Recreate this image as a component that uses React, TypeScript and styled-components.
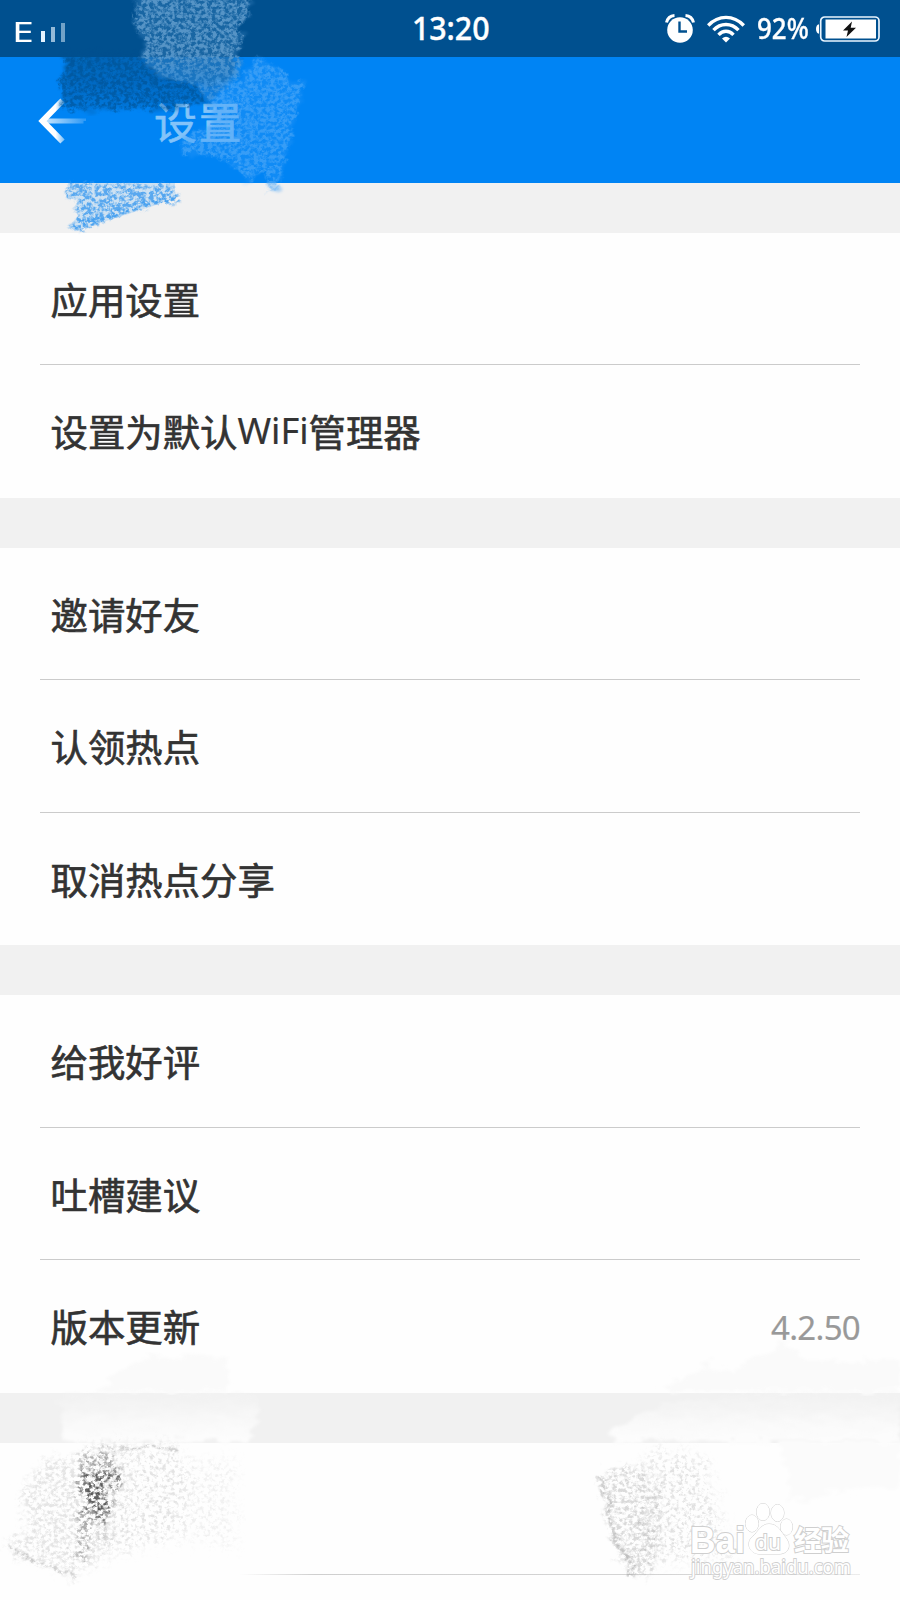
import React from "react";
import styled, { createGlobalStyle } from "styled-components";

const GlobalStyle = createGlobalStyle`
  *, *::before, *::after { box-sizing: border-box; }
  body { margin: 0; background: #fefefe; }
`;

const sans = `"Noto Sans", "Noto Sans CJK SC", sans-serif`;

const Screen = styled.div`
  position: relative;
  width: 900px;
  height: 1600px;
  overflow: hidden;
  display: flex;
  flex-direction: column;
  background: #fefefe;
  font-family: ${sans};
`;

const StatusBar = styled.header`
  flex: none;
  height: 57px;
  display: grid;
  grid-template-columns: 1fr auto 1fr;
  align-items: center;
  padding: 0 20px 0 12px;
  background: #00508f;
  color: #fff;
`;

const Carrier = styled.div`
  display: flex;
  align-items: flex-end;
  gap: 9px;
  height: 20px;
  margin-top: 6px;
`;

const Network = styled.span`
  width: 20px;
  font-size: 28px;
  line-height: 22px;
  font-weight: 400;
  transform: scaleX(1.4);
  transform-origin: left bottom;
`;

const SignalBars = styled.div`
  display: flex;
  align-items: flex-end;
  gap: 6px;
`;

const Bar = styled.i<{ $h: number; $o: number }>`
  width: 4px;
  height: ${(p) => p.$h}px;
  background: #e4f3ff;
  opacity: ${(p) => p.$o};
`;

const Clock = styled.time`
  display: block;
  font-size: 33px;
  line-height: 55px;
  padding-bottom: 2px;
  font-weight: 500;
  transform: translateX(4.5px) scaleX(0.92);
  -webkit-text-stroke: 0.4px #fff;
`;

const StatusIcons = styled.div`
  display: flex;
  justify-content: flex-end;
  align-items: center;
`;

const Percent = styled.span`
  width: 53px;
  margin: 0 5px 0 12px;
  font-size: 28.5px;
  line-height: 57px;
  font-weight: 500;
  transform: scaleX(0.91);
  transform-origin: left;
  -webkit-text-stroke: 0.3px #fff;
`;

const TitleBar = styled.div`
  flex: none;
  height: 125.5px;
  display: flex;
  align-items: center;
  padding-left: 38px;
  background: #0084f4;
`;

const Title = styled.h1`
  margin: 7px 0 0 68px;
  font: 400 43px/60px ${sans};
  color: #83c3f9;
  letter-spacing: 1.6px;
  -webkit-text-stroke: 0.6px #83c3f9;
`;

const Spacer = styled.div`
  flex: none;
  height: 50px;
  background: #f1f1f1;
`;

const Group = styled.section`
  flex: none;
  background: #fefefe;
  padding: 0 40px;
`;

const Row = styled.div`
  height: 132.5px;
  display: flex;
  align-items: center;
  justify-content: space-between;
  padding: 5px 0 0 10.5px;
  font-size: 37.4px;
  line-height: 54px;
  color: #333;

  &:not(:last-child) {
    border-bottom: 1px solid #cbcbcb;
  }

  &:last-child {
    padding-top: 4px;
  }
`;

const Label = styled.span`
  -webkit-text-stroke: 0.65px #333;
`;

const Latin = styled.span`
  font-size: 36.2px;
  line-height: 1;
  vertical-align: 3px;
  -webkit-text-stroke-width: 0.2px;
`;

const Version = styled.span`
  font-size: 33px;
  color: #999;
  letter-spacing: -0.7px;
  -webkit-text-stroke: 0.2px #999;
`;

const FooterLine = styled.div`
  flex: none;
  width: 620px;
  height: 1px;
  margin: 131.5px 0 0 240px;
  background: linear-gradient(90deg, transparent, #cfcfcf 12%, #d5d5d5 70%, #ececec);
`;

const Overlay = styled.svg`
  position: absolute;
  left: 0;
  top: 0;
  pointer-events: none;
`;

const groups: { label: React.ReactNode; value?: string }[][] = [
  [{ label: "应用设置" }, { label: <>设置为默认<Latin>WiFi</Latin>管理器</> }],
  [{ label: "邀请好友" }, { label: "认领热点" }, { label: "取消热点分享" }],
  [{ label: "给我好评" }, { label: "吐槽建议" }, { label: "版本更新", value: "4.2.50" }],
];

const ArrowIcon = styled.svg`
  flex: none;
  margin-top: 2px;
`;

const BackArrow = () => (
  <ArrowIcon width="48" height="50" viewBox="38 96 48 50" fill="none">
    <defs>
      <linearGradient id="tail" x1="50" x2="84" y1="0" y2="0" gradientUnits="userSpaceOnUse">
        <stop offset="0" stopColor="#b5dcfc" />
        <stop offset="1" stopColor="#2f9af6" />
      </linearGradient>
      <linearGradient id="head" x1="50" x2="64" y1="0" y2="0" gradientUnits="userSpaceOnUse">
        <stop offset="0.4" stopColor="#fff" />
        <stop offset="1" stopColor="#7cc0f8" />
      </linearGradient>
    </defs>
    <path d="M46 121H83.500V121.010" stroke="url(#tail)" strokeWidth="5" />
    <path d="M62.500 100.500L42.500 121L62.500 141.500" stroke="url(#head)" strokeWidth="6" />
  </ArrowIcon>
);

const AlarmIcon = () => (
  <svg width="30" height="30" viewBox="0 0 30 30">
    <circle cx="15" cy="16" r="12.800" fill="#fff" />
    <path d="M1.500 8.500C2.500 4.200 5.500 1.800 9.500 1.500M28.500 8.500C27.500 4.200 24.500 1.800 20.500 1.500" fill="none" stroke="#fff" strokeWidth="3" />
    <path d="M14.500 7.500V17.500H22" fill="none" stroke="#00508f" strokeWidth="2.400" />
  </svg>
);

const WifiGlyph = styled.svg`
  margin-left: 12px;
`;

const WifiIcon = () => (
  <WifiGlyph width="38" height="28" viewBox="0 0 38 28" fill="none" stroke="#fff" strokeWidth="3.400">
    <path d="M1.200 10.500C11.500 -0.300 26.500 -0.300 36.800 10.500" />
    <path d="M6.500 15.200C13.500 7.500 24.500 7.500 31.500 15.200" />
    <path d="M11.500 19.800C16 15 22 15 26.500 19.800" />
    <path d="M15 23.500Q19 19.800 23 23.500L19 27.500Z" fill="#fff" stroke="none" />
  </WifiGlyph>
);

const BatteryIcon = () => (
  <svg width="65" height="26" viewBox="0 0 65 26">
    <path d="M4 8.200C0 8.500 0 17.500 4 17.800Z" fill="#fff" />
    <rect x="5.700" y="1" width="58.300" height="24" rx="4" fill="none" stroke="#e9f5ff" strokeWidth="1.700" />
    <rect x="10.500" y="3.500" width="50.500" height="19" fill="#fff" />
    <path d="M37 5.500L28 14.500H33L31.500 21L41 11.800H35.700Z" fill="#111" />
  </svg>
);

const Grain = ({ id, seed, gain, cut, wobble, soft }: { id: string; seed: number; gain: number; cut: number; wobble: number; soft: number }) => (
  <filter id={id} x="-20%" y="-20%" width="140%" height="140%" colorInterpolationFilters="sRGB">
    <feTurbulence type="fractalNoise" baseFrequency="0.24 0.27" numOctaves="4" seed={seed} result="fine" />
    <feColorMatrix in="fine" type="matrix" values={`0 0 0 0 0  0 0 0 0 0  0 0 0 0 0  ${gain} 0 0 0 ${cut}`} result="grain" />
    <feTurbulence type="fractalNoise" baseFrequency="0.09" numOctaves="3" seed={seed + 3} result="coarse" />
    <feGaussianBlur in="SourceGraphic" stdDeviation={soft} result="s" />
    <feDisplacementMap in="s" in2="coarse" scale={wobble} xChannelSelector="R" yChannelSelector="G" result="d" />
    <feComposite in="d" in2="grain" operator="in" />
    <feGaussianBlur stdDeviation="0.5" />
  </filter>
);

const Scribbles = () => (
  <Overlay width="900" height="1600" viewBox="0 0 900 1600">
    <defs>
      <Grain id="chalk" seed={4} gain={4} cut={-1.5} wobble={12} soft={1} />
      <Grain id="sparse" seed={11} gain={4} cut={-1.7} wobble={26} soft={3.5} />
      <Grain id="dust" seed={17} gain={4} cut={-1.9} wobble={24} soft={7} />
      <filter id="smear" x="-10%" y="-10%" width="120%" height="120%">
        <feTurbulence type="fractalNoise" baseFrequency="0.05 0.15" numOctaves="3" seed="2" result="n" />
        <feDisplacementMap in="SourceGraphic" in2="n" scale="18" xChannelSelector="R" yChannelSelector="G" result="d" />
        <feGaussianBlur in="d" stdDeviation="1.5" />
      </filter>
      <linearGradient id="dark" x1="0" x2="0" y1="57" y2="110" gradientUnits="userSpaceOnUse">
        <stop offset="0" stopColor="#00508f" />
        <stop offset="0.500" stopColor="#005499" stopOpacity="0.900" />
        <stop offset="1" stopColor="#005aa5" stopOpacity="0.500" />
      </linearGradient>
      <linearGradient id="mist" x1="0" x2="0" y1="0" y2="88" gradientUnits="userSpaceOnUse">
        <stop offset="0" stopColor="#78add9" />
        <stop offset="0.600" stopColor="#78add9" />
        <stop offset="1" stopColor="#3f9be9" />
      </linearGradient>
      <linearGradient id="fade" x1="0" x2="0" y1="1392" y2="1442" gradientUnits="userSpaceOnUse">
        <stop offset="0" stopColor="#f3f3f3" stopOpacity="0.300" />
        <stop offset="0.600" stopColor="#fafafa" stopOpacity="0.900" />
        <stop offset="1" stopColor="#fdfdfd" />
      </linearGradient>
    </defs>

    <path d="M64 52L240 52L226 86L210 100L170 109L110 110L58 109L66 96L58 82L66 72Z" fill="url(#dark)" opacity="0.600" filter="url(#smear)" />
    <path d="M64 55L240 57L226 86L210 100L170 109L110 110L58 109L66 96L58 82L66 72Z" fill="#005090" opacity="0.600" filter="url(#chalk)" />
    <path d="M136 -12L248 -12L250 14L238 26L244 38L236 54L242 68L232 86L196 84L160 76L140 56L148 46L134 24Z" fill="#4187c3" opacity="0.400" filter="url(#smear)" />
    <path d="M136 -12L248 -12L252 14L238 26L244 38L236 54L242 68L232 86L196 84L160 76L140 56L148 46L134 24Z" fill="url(#mist)" opacity="0.650" filter="url(#chalk)" />
    <path d="M194 84L238 82L258 55L270 64L284 72L292 82L304 80L278 190L268 190L264 172L248 180L228 160L198 154L180 154L182 140L216 120L206 100Z" fill="#2d98f7" opacity="0.350" filter="url(#smear)" />
    <path d="M194 84L238 82L258 55L270 64L284 72L292 82L304 80L278 190L268 190L264 172L248 180L228 160L198 154L180 154L182 140L216 120L206 100Z" fill="#5fb0f8" opacity="0.500" filter="url(#chalk)" />
    <path d="M68 183H175V193L181 196L150 207L75 231L69 226L78 216L74 207L79 200L66 198Z" fill="#a2cef5" opacity="0.450" />
    <path d="M66 184H175V193L181 196L150 207L75 231L69 226L78 216L74 207L79 200L66 198Z" fill="#459fef" opacity="0.850" filter="url(#chalk)" />
    <path d="M72 227L105 217L140 206L180 197" fill="none" stroke="#459fef" strokeWidth="4" filter="url(#chalk)" />

    <path d="M60 1392H255L258 1410L250 1442H66L62 1422Z" fill="url(#fade)" filter="url(#smear)" />
    <path d="M96 1391L125 1366L150 1356L230 1358L228 1391Z" fill="#fafafa" filter="url(#smear)" />
    <path d="M605 1434L660 1406L760 1392L900 1392V1442H620Z" fill="url(#fade)" filter="url(#smear)" />
    <path d="M780 1442H900V1485L790 1500Z" fill="#fbfbfb" filter="url(#smear)" />
    <path d="M660 1391L710 1362L730 1374L780 1342L810 1360L900 1360V1391Z" fill="#fafafa" filter="url(#smear)" />

    <path d="M48 1456L80 1464L96 1456L120 1456L110 1510L116 1546L76 1576L6 1550L24 1528L30 1512L16 1500Z" fill="#c4c4c4" opacity="0.420" filter="url(#sparse)" />
    <path d="M90 1446L178 1446L190 1480L180 1536L100 1558Z" fill="#bdbdbd" opacity="0.400" filter="url(#dust)" />
    <path d="M180 1465L235 1460L235 1546L180 1536Z" fill="#ddd" opacity="0.400" filter="url(#dust)" />
    <path d="M98 1448H178M8 1548L76 1578" fill="none" stroke="#aaa" strokeWidth="4" opacity="0.550" filter="url(#chalk)" />
    <path d="M72 1456L106 1448L118 1462L114 1474L124 1482L106 1492L102 1498L114 1508L98 1526L92 1542L80 1560L72 1558L84 1535L74 1528L86 1504L76 1484L90 1470Z" fill="#777" opacity="0.550" filter="url(#sparse)" />
    <path d="M78 1478L108 1470L122 1478L104 1492L106 1504L116 1510L90 1520L86 1494Z" fill="#333" opacity="0.700" filter="url(#sparse)" />
    <path d="M600 1474L645 1466L656 1480L660 1520L654 1566L636 1578L620 1556Z" fill="#aaa" opacity="0.420" filter="url(#sparse)" />
    <path d="M646 1454L700 1454L716 1505L732 1558L710 1560L650 1560Z" fill="#b8b8b8" opacity="0.400" filter="url(#dust)" />
    <path d="M600 1475L610 1515L618 1550L632 1560L631 1577" fill="none" stroke="#999" strokeWidth="7" opacity="0.450" filter="url(#chalk)" />
    <path d="M640 1510L652 1560" fill="none" stroke="#999" strokeWidth="18" opacity="0.350" filter="url(#dust)" />

    <g fill="#fff" stroke="#cfcfcf" strokeWidth="1" paintOrder="stroke">
      <text x="690" y="1553" fontFamily="Liberation Sans, sans-serif" fontWeight="700" fontSize="37" textLength="55" lengthAdjust="spacingAndGlyphs" strokeWidth="2">Bai</text>
      <ellipse cx="752" cy="1523.500" rx="6.500" ry="8.500" />
      <ellipse cx="763" cy="1512" rx="6.500" ry="8.500" />
      <ellipse cx="777.500" cy="1513" rx="6.500" ry="8.500" />
      <ellipse cx="786.500" cy="1527" rx="6" ry="8" />
      <path d="M769 1524C778 1524 781 1532 786 1538C792 1546 788 1554 779 1554H759C749 1553 746 1543 752 1537C759 1531 761 1524 769 1524Z" />
      <text x="755" y="1550" fontFamily="Noto Sans, sans-serif" fontSize="21" textLength="26" lengthAdjust="spacingAndGlyphs" strokeWidth="2">du</text>
      <text x="794" y="1551" fontFamily="Noto Sans CJK SC, sans-serif" fontWeight="700" fontSize="28" textLength="55" strokeWidth="2">经验</text>
      <text x="691" y="1573.500" fontFamily="Noto Sans, sans-serif" fontSize="19" textLength="160" lengthAdjust="spacingAndGlyphs" strokeWidth="1.800">jingyan.baidu.com</text>
    </g>
  </Overlay>
);

export default function App() {
  return (
    <>
      <GlobalStyle />
      <Screen>
        <StatusBar>
          <Carrier>
            <Network>E</Network>
            <SignalBars>
              <Bar $h={11} $o={1} />
              <Bar $h={15} $o={0.65} />
              <Bar $h={19} $o={0.5} />
            </SignalBars>
          </Carrier>
          <Clock>13:20</Clock>
          <StatusIcons>
            <AlarmIcon />
            <WifiIcon />
            <Percent>92%</Percent>
            <BatteryIcon />
          </StatusIcons>
        </StatusBar>
        <TitleBar>
          <BackArrow />
          <Title>设置</Title>
        </TitleBar>
        <Spacer />
        {groups.map((rows, i) => (
          <React.Fragment key={i}>
            <Group>
              {rows.map((row, j) => (
                <Row key={j}>
                  <Label>{row.label}</Label>
                  {row.value && <Version>{row.value}</Version>}
                </Row>
              ))}
            </Group>
            <Spacer />
          </React.Fragment>
        ))}
        <FooterLine />
        <Scribbles />
      </Screen>
    </>
  );
}
